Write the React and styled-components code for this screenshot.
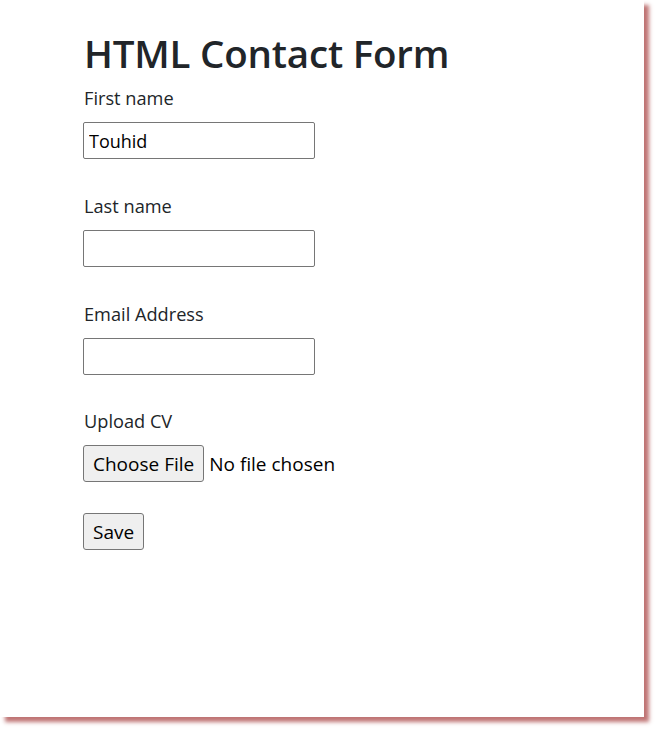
import React from 'react';
import styled, { createGlobalStyle } from 'styled-components';

const GlobalStyle = createGlobalStyle`
    body {
        margin: 0;
        background: #ffffff;
        font-family: 'Open Sans', 'Noto Sans', sans-serif;
    }
`;

const Screen = styled.div`
    height: 732px;
    overflow: hidden;
`;

const Page = styled.div`
    width: 644px;
    height: 717px;
    background: #ffffff;
    box-shadow: 5px 5px 4px rgba(180, 92, 92, 0.85);
    box-sizing: border-box;
    padding: 25px 0 0 83px;
`;

const Title = styled.h1`
    margin: 0 0 5px 1px;
    font-size: 38.5px;
    font-weight: 600;
    line-height: 56px;
    color: #212529;
    letter-spacing: -0.2px;
`;

const Form = styled.form`
    display: flex;
    flex-direction: column;
    align-items: flex-start;
`;

const Field = styled.div`
    display: flex;
    flex-direction: column;
    align-items: flex-start;
    margin-bottom: ${(p) => p.$gap || 35}px;
`;

const Label = styled.label`
    font-size: 18.2px;
    line-height: 24px;
    color: #212529;
    margin: 0 0 12px 1px;
`;

const TextInput = styled.input`
    width: 232px;
    height: 37px;
    box-sizing: border-box;
    border: 1px solid #767676;
    border-radius: 2px;
    padding: 0 5px;
    font-family: inherit;
    font-size: 18px;
    color: #000;
`;

const FileRow = styled.div`
    display: flex;
    align-items: center;
    gap: 5px;
`;

const Button = styled.button`
    height: 37px;
    box-sizing: border-box;
    padding: 0 9px;
    background: #efefef;
    border: 1px solid #767676;
    border-radius: 3px;
    font-family: inherit;
    font-size: 19px;
    color: #000;
`;

const Hint = styled.span`
    font-size: 19px;
    color: #000;
`;

export default function App() {
    return (
        <Screen>
            <GlobalStyle />
            <Page>
                <Title>HTML Contact Form</Title>
                <Form onSubmit={(e) => e.preventDefault()}>
                    <Field>
                        <Label>First name</Label>
                        <TextInput type="text" defaultValue="Touhid" />
                    </Field>
                    <Field>
                        <Label>Last name</Label>
                        <TextInput type="text" />
                    </Field>
                    <Field $gap={34}>
                        <Label>Email Address</Label>
                        <TextInput type="email" />
                    </Field>
                    <Field $gap={31}>
                        <Label>Upload CV</Label>
                        <FileRow>
                            <Button type="button">Choose File</Button>
                            <Hint>No file chosen</Hint>
                        </FileRow>
                    </Field>
                    <Button type="submit">Save</Button>
                </Form>
            </Page>
        </Screen>
    );
}
